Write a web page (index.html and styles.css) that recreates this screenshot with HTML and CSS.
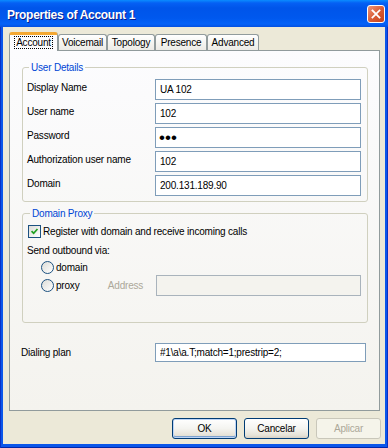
FILE: index.html
```html
<!DOCTYPE html>
<html lang="en">
<head>
    <meta charset="UTF-8">
    <meta name="viewport" content="width=device-width, initial-scale=1.0">
    <title>Properties of Account 1</title>
    <link rel="stylesheet" href="styles.css">
</head>
<body>
<div class="window">
    <div class="titlebar">
        <span class="title">Properties of Account 1</span>
        <span class="close">
            <svg width="18" height="18" viewBox="0 0 18 18">
                <path d="M5 5 L13 13 M13 5 L5 13" stroke="#fff" stroke-width="2" stroke-linecap="square"/>
            </svg>
        </span>
    </div>

    <div class="client">
        <div class="tabs">
            <div class="tab active w-account"><span class="focus">Account</span></div>
            <div class="tab w-voicemail">Voicemail</div>
            <div class="tab w-topology">Topology</div>
            <div class="tab w-presence">Presence</div>
            <div class="tab w-advanced">Advanced</div>
        </div>

        <div class="panel">
            <fieldset class="group details">
                <legend>User Details</legend>
                <div class="form-grid">
                    <label>Display Name</label>
                    <input type="text" value="UA 102">
                    <label>User name</label>
                    <input type="text" value="102">
                    <label>Password</label>
                    <input type="password" class="password" value="abc">
                    <label>Authorization user name</label>
                    <input type="text" value="102">
                    <label>Domain</label>
                    <input type="text" value="200.131.189.90">
                </div>
            </fieldset>

            <fieldset class="group proxy">
                <legend>Domain Proxy</legend>
                <div class="check-row">
                    <span class="checkbox">
                        <svg width="13" height="13" viewBox="0 0 13 13">
                            <path d="M3 6 L5.5 8.5 L10 3.5" fill="none" stroke="#21A121" stroke-width="2"/>
                        </svg>
                    </span>
                    Register with domain and receive incoming calls
                </div>
                <div class="line">Send outbound via:</div>
                <div class="radio-row"><span class="radio"></span>domain</div>
                <div class="radio-row proxy-row">
                    <span class="radio"></span>
                    <span class="proxy-label">proxy</span>
                    <span class="muted">Address</span>
                    <input type="text" class="address" disabled>
                </div>
            </fieldset>

            <div class="dial-row">
                <label class="dial-label">Dialing plan</label>
                <input type="text" class="dial-input" value="#1\a\a.T;match=1;prestrip=2;">
            </div>
        </div>

        <div class="buttons">
            <button class="btn default">OK</button>
            <button class="btn">Cancelar</button>
            <button class="btn" disabled>Aplicar</button>
        </div>
    </div>
</div>
</body>
</html>
```

FILE: styles.css
```css
body { margin: 0; font: 10px "Liberation Sans", Arial, sans-serif; letter-spacing: -0.2px; color: #000; }

.window { width: 388px; height: 448px; display: flex; flex-direction: column; background: #0A56EA; box-shadow: inset 1px 0 0 #0831C6, inset -1px 0 0 #0831C6, inset 0 -1px 0 #0025A8; }

.titlebar { height: 27px; flex: none; display: flex; align-items: center; justify-content: space-between; padding: 0 3px 0 7px;
    background: linear-gradient(#0A8CFF 0, #0560F4 3px, #0055EA 8px, #0058EE 18px, #0462F8 24px, #0450E0 27px); }
.title { color: #fff; font-weight: bold; font-size: 12px; letter-spacing: -0.3px; padding-top: 2px; text-shadow: 1px 1px #0A1B8C; }
.close { width: 18px; height: 18px; box-sizing: border-box; border: 1px solid #fff; border-radius: 3px;
    background: linear-gradient(135deg, #EE9578, #D85A32 55%, #C4431D); display: flex; align-items: center; justify-content: center; }
.close svg { width: 16px; height: 16px; }

.client { flex: 1; margin: 0 3px 4px; background: #ECE9D8; padding: 5px 5px 0 6px; }

.tabs { display: flex; align-items: flex-end; height: 18px; position: relative; z-index: 1; }
.tab { height: 16px; box-sizing: border-box; border: 1px solid #919B9C; border-bottom: none; border-radius: 3px 3px 0 0;
    background: linear-gradient(#FFFFFF, #F3F3EF 60%, #ECEBE6); display: flex; align-items: center; justify-content: center; line-height: 13px; }
.tab.active { height: 19px; margin-bottom: -1px; border-top: 3px solid #F4A832; background: #FCFCFE; padding-bottom: 1px; }
.focus { border: 1px dotted #000; padding: 0 1px; line-height: 11px; }
.w-account { width: 49px; }
.w-voicemail { width: 49px; }
.w-topology { width: 48px; }
.w-presence { width: 52px; }
.w-advanced { width: 52px; }

.panel { height: 361px; box-sizing: border-box; border: 1px solid #919B9C; background: linear-gradient(#FCFCFE, #F4F3EE);
    padding: 10px 11px 0 12px; }

.group { margin: 0; border: 1px solid #D0D0BF; border-radius: 3px; min-width: 0; }
.group legend { color: #0046D5; line-height: 13px; padding: 0 2px; margin-left: 2px; }
.details { padding: 5px 6px 5px 4px; }
.proxy { margin-top: 5px; padding: 0 6px 26px 5px; }

.form-grid { display: grid; grid-template-columns: 128px 206px; row-gap: 3px; }
.form-grid label { padding-top: 2px; line-height: 13px; }

input { font: inherit; letter-spacing: inherit; color: #000; height: 21px; box-sizing: border-box; border: 1px solid #7F9DB9; background: #fff; padding: 0 4px; margin: 0; outline: none; }
.password { font-size: 17px; letter-spacing: 0; padding-left: 3px; }
.address { width: 206px; background: #F4F3EE; border-color: #A9B3BC; }

.check-row { display: flex; align-items: center; height: 15px; margin-top: 4px; }
.checkbox { width: 13px; height: 13px; box-sizing: border-box; border: 1px solid #1C5180; background: linear-gradient(135deg, #DCDCD7, #FFFFFF);
    margin-right: 2px; display: flex; }
.checkbox svg { width: 11px; height: 11px; }
.line { margin-top: 5px; line-height: 14px; margin-left: -1px; }
.radio-row { display: flex; align-items: center; height: 14px; margin-top: 2px; padding-left: 13px; }
.radio { width: 13px; height: 13px; box-sizing: border-box; border: 1px solid #1C5180; border-radius: 50%;
    background: linear-gradient(135deg, #DCDCD7, #FFFFFF); margin-right: 2px; flex: none; }
.proxy-row { height: 21px; margin-top: 1px; }
.proxy-label { width: 52px; }
.muted { width: 48px; color: #ACA899; }

.dial-row { display: flex; align-items: center; margin-top: 20px; margin-left: -1px; }
.dial-label { width: 134px; flex: none; }
.dial-input { width: 211px; height: 19px; flex: none; }

.buttons { display: flex; justify-content: flex-end; gap: 7px; margin-top: 7px; margin-right: -1px; }
.btn { width: 65px; height: 21px; font: inherit; letter-spacing: inherit; color: #000; border: 1px solid #003C74; border-radius: 3px;
    background: linear-gradient(#FFFFFF, #F4F4F0 50%, #E6E3D8 85%, #D6D0C5); padding: 0; }
.btn.default { box-shadow: inset 0 0 0 1px #BCD4F6, inset 0 -1px 0 1px #7DA2CE; }
.btn:disabled { color: #ACA899; border-color: #C9C7BA; background: #F5F4EA; }
```
